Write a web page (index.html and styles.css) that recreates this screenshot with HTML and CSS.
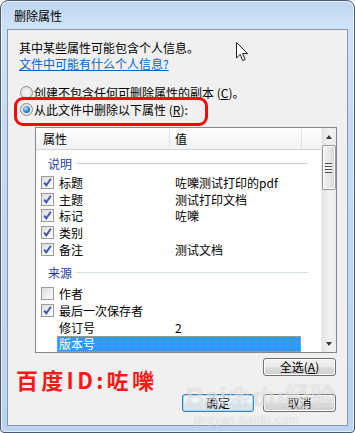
FILE: index.html
```html
<!DOCTYPE html>
<html lang="zh-CN">
<head>
<meta charset="utf-8">
<title>删除属性</title>
<link rel="stylesheet" href="styles.css">
</head>
<body>
<div class="window">
  <div class="titlebar">删除属性</div>
  <div class="panel">
    <p class="intro">其中某些属性可能包含个人信息。</p>
    <a class="link" href="#">文件中可能有什么个人信息?</a>
    <div class="options">
      <div class="radio-row"><span class="radio"></span>创建不包含任何可删除属性的副本 (<u>C</u>)。</div>
      <div class="radio-row"><span class="radio on"></span>从此文件中删除以下属性 (<u>R</u>):<span class="highlight"></span></div>
    </div>
    <div class="list">
      <div class="list-main">
        <div class="header">
          <div class="hcell h1">属性</div>
          <div class="hcell h2">值</div>
          <div class="hcell h3"></div>
        </div>
        <div class="body">
          <div class="group">说明</div>
          <div class="row"><span class="chk"><span class="cb"><svg viewBox="0 0 11 11" width="11" height="11"><path d="M2.2 5.6 L4.3 8.4 L8.8 1.8" fill="none" stroke="#3c55a5" stroke-width="1.9"/></svg></span></span><span class="cells"><span class="name">标题</span><span class="val">咗嚛测试打印的pdf</span></span></div>
          <div class="row"><span class="chk"><span class="cb"><svg viewBox="0 0 11 11" width="11" height="11"><path d="M2.2 5.6 L4.3 8.4 L8.8 1.8" fill="none" stroke="#3c55a5" stroke-width="1.9"/></svg></span></span><span class="cells"><span class="name">主题</span><span class="val">测试打印文档</span></span></div>
          <div class="row"><span class="chk"><span class="cb"><svg viewBox="0 0 11 11" width="11" height="11"><path d="M2.2 5.6 L4.3 8.4 L8.8 1.8" fill="none" stroke="#3c55a5" stroke-width="1.9"/></svg></span></span><span class="cells"><span class="name">标记</span><span class="val">咗嚛</span></span></div>
          <div class="row"><span class="chk"><span class="cb"><svg viewBox="0 0 11 11" width="11" height="11"><path d="M2.2 5.6 L4.3 8.4 L8.8 1.8" fill="none" stroke="#3c55a5" stroke-width="1.9"/></svg></span></span><span class="cells"><span class="name">类别</span><span class="val"></span></span></div>
          <div class="row"><span class="chk"><span class="cb"><svg viewBox="0 0 11 11" width="11" height="11"><path d="M2.2 5.6 L4.3 8.4 L8.8 1.8" fill="none" stroke="#3c55a5" stroke-width="1.9"/></svg></span></span><span class="cells"><span class="name">备注</span><span class="val">测试文档</span></span></div>
          <div class="group g2">来源</div>
          <div class="row"><span class="chk"><span class="cb"></span></span><span class="cells"><span class="name">作者</span><span class="val"></span></span></div>
          <div class="row"><span class="chk"><span class="cb"><svg viewBox="0 0 11 11" width="11" height="11"><path d="M2.2 5.6 L4.3 8.4 L8.8 1.8" fill="none" stroke="#3c55a5" stroke-width="1.9"/></svg></span></span><span class="cells"><span class="name">最后一次保存者</span><span class="val"></span></span></div>
          <div class="row"><span class="chk"></span><span class="cells"><span class="name">修订号</span><span class="val">2</span></span></div>
          <div class="row sel"><span class="chk"></span><span class="cells"><span class="name">版本号</span><span class="val"></span></span></div>
        </div>
      </div>
      <div class="scrollbar">
        <div class="sb-btn"><span class="tri up"></span></div>
        <div class="thumb"><span class="grip"></span></div>
        <div class="sb-btn down"><span class="tri dn"></span></div>
      </div>
    </div>
    <div class="actions">
      <div class="stamp">百度ID:咗嚛</div>
      <button class="btn b-all">全选(<u>A</u>)</button>
      <button class="btn b-ok default">确定</button>
      <button class="btn b-cancel">取消</button>
    </div>
    <div class="watermark"><span class="wm-big">Bai<span class="paw">❀</span>du经验</span><span class="wm-small">jingyan.baidu.com</span></div>
  </div>
  <svg class="cursor" width="13" height="20" viewBox="0 0 13 20"><path d="M0.5 0.5 L0.5 16 L4.2 12.4 L6.8 18.6 L9.2 17.6 L6.6 11.6 L11.6 11.6 Z" fill="#fff" stroke="#222" stroke-width="1" stroke-linejoin="round"/></svg>
</div>
</body>
</html>
```

FILE: styles.css
```css
* { box-sizing: border-box; }
html, body { margin: 0; padding: 0; }
body {
  width: 355px;
  height: 433px;
  overflow: hidden;
  background: #ffffff;
  font-family: "Noto Sans CJK SC", "Noto Sans", sans-serif;
  font-size: 12px;
  color: #000;
}
.window {
  position: relative;
  width: 355px;
  height: 433px;
  border: 1px solid #4a5a70;
  border-radius: 8px 8px 4px 4px;
  background: linear-gradient(#bfd6f0, #d0e2f7 26px, #c6dbf3 120px, #bcd3ee);
  box-shadow: inset 0 0 0 1px rgba(255,255,255,0.6);
  padding: 0 6px 6px;
  display: flex;
  flex-direction: column;
}
.titlebar {
  height: 28px;
  display: flex;
  align-items: center;
  padding-left: 7px;
  padding-top: 1px;
  color: #000;
  font-size: 12px;
}
.panel {
  position: relative;
  flex: 1;
  background: #f0f0f0;
  border: 1px solid #8596ad;
  padding: 10px 11px 0 11px;
}
.intro { margin: 0; line-height: 16px; }
.link {
  display: block;
  width: fit-content;
  line-height: 16px;
  color: #0066cc;
  text-decoration: underline;
}
.options { margin-top: 12px; }
.radio-row {
  position: relative;
  display: flex;
  align-items: center;
  height: 17px;
  white-space: nowrap;
}
.radio {
  width: 13px;
  height: 13px;
  margin: 0 1px 0 1px;
  border-radius: 50%;
  border: 1px solid #8c8c8c;
  background: radial-gradient(circle at 50% 50%, #f7f7f7, #e2e2e2 70%, #d4d4d4);
  position: relative;
  flex: none;
}
.radio.on::after {
  content: "";
  position: absolute;
  left: 2px;
  top: 2px;
  width: 7px;
  height: 7px;
  border-radius: 50%;
  background: radial-gradient(circle at 40% 35%, #d6ecff, #3a8ad8 45%, #0f4f94);
}
.highlight {
  position: absolute;
  left: -5px;
  top: -4px;
  width: 194px;
  height: 29px;
  border: 3px solid #f20a0a;
  border-radius: 9px;
}
.list {
  margin: 9px 0 0 16px;
  width: 302px;
  height: 226px;
  border: 1px solid #828790;
  background: #fff;
  display: flex;
}
.list-main {
  width: 285px;
  display: flex;
  flex-direction: column;
  overflow: hidden;
}
.header {
  height: 22px;
  display: flex;
  background: linear-gradient(#ffffff, #f7f8f9 50%, #f1f2f4);
  border-bottom: 1px solid #d5d5d5;
  flex: none;
}
.hcell {
  border-right: 1px solid #e2e3e5;
  line-height: 21px;
}
.h1 { width: 134px; padding-left: 7px; }
.h2 { width: 132px; padding-left: 5px; }
.h3 { width: 19px; border-right: none; }
.body {
  flex: 1;
  padding-top: 2px;
  overflow: hidden;
}
.group {
  display: flex;
  align-items: center;
  height: 22px;
  width: 272px;
  padding-left: 12px;
  color: #1e3ca3;
}
.group::after {
  content: "";
  flex: 1;
  height: 1px;
  margin-left: 4px;
  background: #c3cfe0;
}
.group.g2 { margin-top: 4px; margin-bottom: 1.5px; }
.group.g2::after { background: #d4dfec; }
.row {
  display: flex;
  height: 16.75px;
  align-items: center;
}
.chk {
  width: 21px;
  padding-left: 5px;
  display: flex;
  align-items: center;
  flex: none;
}
.cb {
  width: 13px;
  height: 13px;
  border: 1px solid #999a9a;
  background: linear-gradient(135deg, #dcdcdc, #f1f1f1 60%, #fbfbfb);
  display: flex;
  align-items: center;
  justify-content: center;
}
.cb svg { display: block; }
.cells {
  width: 244px;
  height: 100%;
  display: flex;
  align-items: center;
  white-space: nowrap;
}
.name { width: 113px; padding-left: 2px; }
.val { padding-left: 5px; }
.row.sel .cells {
  background: #3399ff;
  color: #fff;
  outline: 1px dotted #e8a040;
  outline-offset: -1px;
}
.scrollbar {
  width: 15px;
  display: flex;
  flex-direction: column;
  background: linear-gradient(to right, #e4e4e4, #f2f2f2 60%, #ececec);
  border-left: 1px solid #ececec;
}
.sb-btn {
  height: 17px;
  display: flex;
  align-items: center;
  justify-content: center;
  flex: none;
}
.sb-btn.down { margin-top: auto; height: 16px; }
.tri { width: 0; height: 0; border-left: 3.5px solid transparent; border-right: 3.5px solid transparent; }
.tri.up { border-bottom: 4px solid #3a3a3a; }
.tri.dn { border-top: 4px solid #3a3a3a; }
.thumb {
  height: 45px;
  border: 1px solid #979797;
  border-radius: 2px;
  background: linear-gradient(to right, #f4f4f4, #e8e8e8 50%, #d6d6d6);
  box-shadow: inset 0 0 0 1px #fbfbfb;
  display: flex;
  align-items: center;
  justify-content: center;
  flex: none;
}
.grip {
  width: 7px;
  height: 10px;
  margin-right: 2px;
  background: repeating-linear-gradient(#4d4d4d 0 1px, #f4f4f4 1px 3px);
}
.actions {
  margin-top: 5px;
  display: grid;
  grid-template-columns: 1fr 72px 73px;
  grid-template-rows: 18px 18px;
  column-gap: 9px;
  row-gap: 18px;
}
.stamp {
  grid-column: 1;
  grid-row: 1 / 3;
  align-self: start;
  margin: 10px 0 0 -3px;
  color: #f51919;
  font-size: 22px;
  line-height: 22px;
  font-weight: 700;
  letter-spacing: 3.3px;
  white-space: nowrap;
}
.btn {
  position: relative;
  z-index: 1;
  font-family: "Noto Sans CJK SC", "Noto Sans", sans-serif;
  font-size: 12px;
  color: #000;
  padding: 0;
  border: 1px solid #707070;
  border-radius: 3px;
  background: linear-gradient(#f2f2f2, #ebebeb 50%, #dddddd 50%, #cfcfcf);
  box-shadow: inset 0 0 0 1px #fcfcfc;
  line-height: 16px;
}
.b-all { grid-column: 3; grid-row: 1; }
.b-ok { grid-column: 2; grid-row: 2; }
.b-cancel { grid-column: 3; grid-row: 2; }
.btn.default {
  border-color: #3c7fb1;
  background: linear-gradient(#f3f8fc, #eaf3fa 50%, #dde9f3 50%, #d3e3ef);
  box-shadow: inset 0 0 0 1px #9fdcf8;
}
.watermark {
  position: absolute;
  z-index: 2;
  left: 178px;
  top: 353px;
  display: flex;
  flex-direction: column;
  color: rgba(255,255,255,0.45);
  text-shadow: 0 0 1px rgba(140,140,140,0.35);
  pointer-events: none;
  white-space: nowrap;
}
.wm-big { font-family: "Liberation Sans", sans-serif; font-size: 26px; font-weight: 700; line-height: 28px; }
.paw { font-size: 22px; margin: 0 2px; }
.wm-small { font-family: "Liberation Sans", sans-serif; font-size: 12px; line-height: 14px; margin-left: 8px; letter-spacing: 0.5px; }
.cursor {
  position: absolute;
  left: 235px;
  top: 41px;
}
```
